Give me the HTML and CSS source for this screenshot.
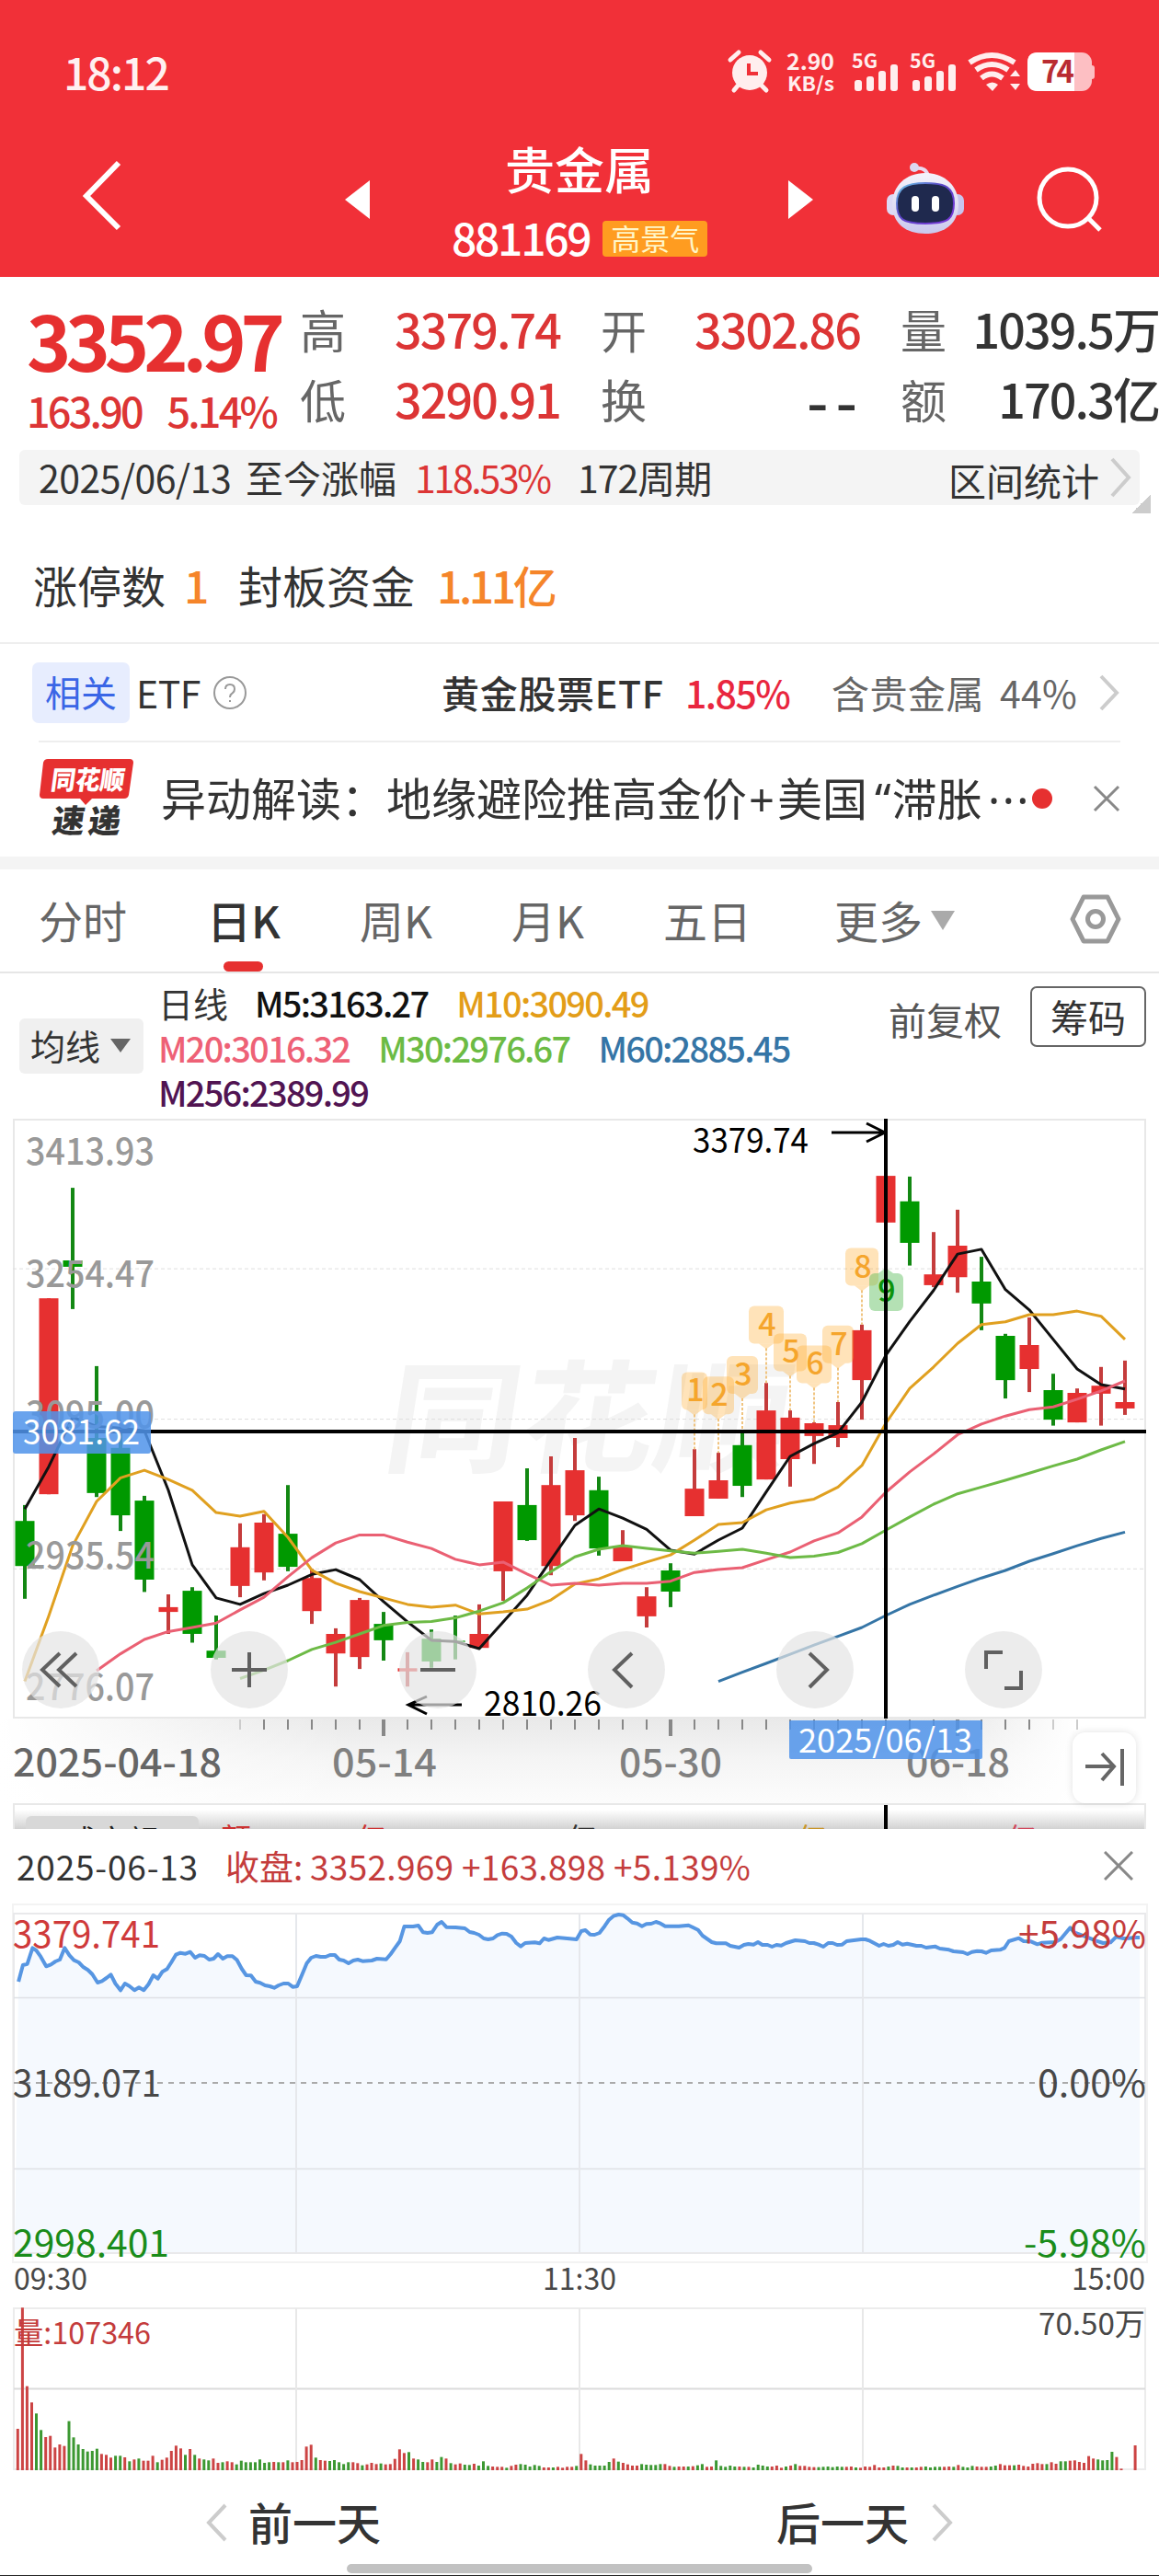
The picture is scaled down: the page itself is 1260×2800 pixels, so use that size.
FILE: index.html
```html
<!DOCTYPE html>
<html lang="zh-CN">
<head>
    <meta charset="UTF-8">
    <title>贵金属 881169</title>
    <link rel="stylesheet" href="styles.css">
</head>
<body>
    <header class="header">
        <div class="status-bar">
            <span class="clock">18:12</span>
            <svg class="status-icons" width="404" height="50" viewBox="0 0 404 50">
                <g fill="#ffeeee" stroke="none">
                    <circle cx="25" cy="26" r="19"/>
                    <path d="M4 12L13 4M46 12L37 4M13 39L8 45M37 39L43 45" stroke="#ffeeee" stroke-width="5" stroke-linecap="round"/>
                    <path d="M24 16v11h10" fill="none" stroke="#f13038" stroke-width="4"/>
                    <text x="65" y="23" font-size="24" font-weight="700" textLength="52" lengthAdjust="spacingAndGlyphs">2.90</text>
                    <text x="66" y="46" font-size="21" font-weight="700" textLength="51" lengthAdjust="spacingAndGlyphs">KB/s</text>
                    <g id="signal">
                        <text x="136" y="21" font-size="21" font-weight="700" textLength="28" lengthAdjust="spacingAndGlyphs">5G</text>
                        <rect x="139" y="34" width="8" height="12" rx="3"/>
                        <rect x="152" y="30" width="8" height="16" rx="3"/>
                        <rect x="165" y="24" width="8" height="22" rx="3"/>
                        <rect x="178" y="17" width="8" height="29" rx="3"/>
                    </g>
                    <use href="#signal" x="63"/>
                    <g fill="none" stroke="#ffeeee" stroke-width="6">
                        <path d="M264 15Q288 -1 313 15"/>
                        <path d="M271 23Q288 11 306 23"/>
                        <path d="M277 32Q288 23 300 32"/>
                    </g>
                    <path d="M282 39q7-5 13 0l-6 7z"/>
                    <path d="M308 31l6-7 5 7zM308 39l6 7 5-7z" transform="translate(0,-1)"/>
                    <rect x="392" y="18" width="8" height="15" rx="3" fill="#fdbfc3"/>
                    <rect x="327" y="4" width="70" height="42" rx="11" fill="#fdbfc3"/>
                    <path d="M338 4h40v42h-40q-11 0-11-11v-20q0-11 11-11z" fill="#fff"/>
                    <text x="342" y="37" font-size="33" font-weight="700" fill="#b92c31" textLength="36">74</text>
                </g>
            </svg>
        </div>
        <div class="nav-bar">
            <svg class="back" width="44" height="80" viewBox="0 0 44 80"><path d="M41 3L6 39L41 74" fill="none" stroke="#fff" stroke-width="6"/></svg>
            <svg class="prev" width="28" height="42" viewBox="0 0 28 42"><path d="M27 0V42L0 21z" fill="#fff"/></svg>
            <div class="title">
                <h1>贵金属</h1>
                <div class="code"><span class="code-num">881169</span><span class="tag">高景气</span></div>
            </div>
            <svg class="next" width="28" height="42" viewBox="0 0 28 42"><path d="M0 0V42L27 21z" fill="#fff"/></svg>
            <svg class="robot" width="88" height="80" viewBox="0 0 88 80">
                <defs>
                    <linearGradient id="head" x1="0" y1="0" x2="0" y2="1"><stop offset="0" stop-color="#f4f2fb"/><stop offset=".6" stop-color="#dedcf2"/><stop offset="1" stop-color="#c9c8ee"/></linearGradient>
                    <linearGradient id="rim" x1="0" y1="0" x2="1" y2="1"><stop offset="0" stop-color="#6fd3ea"/><stop offset=".4" stop-color="#5a48c8"/><stop offset="1" stop-color="#7a35d8"/></linearGradient>
                </defs>
                <path d="M31 8q14-2 15 10" fill="none" stroke="#ead9ee" stroke-width="4"/>
                <circle cx="31" cy="7" r="5" fill="#dcd6f0"/>
                <rect x="1" y="36" width="14" height="23" rx="7" fill="#dcd9f5"/>
                <rect x="71" y="36" width="14" height="23" rx="7" fill="#c8c5ee"/>
                <path d="M43 13C64 13 79 27 79 47C79 68 64 79 43 79C22 79 7 68 7 47C7 27 22 13 43 13z" fill="url(#head)"/>
                <path d="M43 24C65 24 74 29 74 46C74 63 68 68 43 68C18 68 12 63 12 46C12 29 22 24 43 24z" fill="#1f294e" stroke="url(#rim)" stroke-width="2"/>
                <rect x="28" y="38" width="8" height="17" rx="4" fill="#fff"/>
                <rect x="50" y="38" width="8" height="17" rx="4" fill="#fff"/>
            </svg>
            <svg class="search" width="74" height="74" viewBox="0 0 74 74"><g fill="none" stroke="#fff" stroke-width="5"><circle cx="35" cy="35" r="31"/><path d="M57 57L70 70"/></g></svg>
        </div>
    </header>

    <section class="quote">
        <div class="price-box">
            <div class="price">3352.97</div>
            <div class="change"><span>163.90</span><span>5.14%</span></div>
        </div>
        <div class="quote-grid">
            <span class="label">高</span><span class="val up">3379.74</span>
            <span class="label">开</span><span class="val up">3302.86</span>
            <span class="label">量</span><span class="val">1039.5万</span>
            <span class="label">低</span><span class="val up">3290.91</span>
            <span class="label">换</span><span class="val dashes">--</span>
            <span class="label">额</span><span class="val">170.3亿</span>
        </div>
    </section>

    <section class="period">
        <span class="period-date">2025/06/13</span>
        <span class="period-name">至今涨幅</span>
        <span class="period-pct up">118.53%</span>
        <span class="period-count">172周期</span>
        <span class="period-link">区间统计</span>
        <svg width="24" height="44" viewBox="0 0 24 44"><path d="M2 2L20 22L2 42" fill="none" stroke="#ccc" stroke-width="4"/></svg>
        <i class="corner"></i>
    </section>

    <section class="limit">
        <span>涨停数</span><b class="one">1</b><span class="seal">封板资金</span><b>1.11亿</b>
    </section>

    <section class="etf">
        <span class="etf-badge">相关</span>
        <span class="etf-word">ETF</span>
        <svg class="help" width="38" height="38" viewBox="0 0 38 38"><circle cx="19" cy="19" r="17" fill="none" stroke="#999" stroke-width="2"/><path d="M14 15q0-5 5-5t5 5q0 3-3 5q-2 1-2 4M19 27v2" fill="none" stroke="#999" stroke-width="2"/></svg>
        <span class="etf-name">黄金股票ETF</span>
        <span class="etf-pct">1.85%</span>
        <span class="etf-hold">含贵金属</span>
        <span class="etf-rate">44%</span>
        <svg class="etf-arrow" width="24" height="40" viewBox="0 0 24 40"><path d="M3 2L20 20L3 38" fill="none" stroke="#ccc" stroke-width="4"/></svg>
    </section>

    <section class="news">
        <svg class="news-logo" width="106" height="86" viewBox="0 0 106 86">
            <path d="M10 1H99q4 0 4 4L98 40q-1 4-5 4H58l-7 7l-6-7H5q-4 0-4-4L5 5q1-4 5-4z" fill="#e63030"/>
            <g transform="skewX(-8)" font-weight="900">
                <text x="17" y="34" font-size="28" fill="#fff" textLength="80" lengthAdjust="spacingAndGlyphs">同花顺</text>
                <text x="25" y="81" font-size="35" fill="#333" textLength="74">速递</text>
            </g>
        </svg>
        <span class="news-text">异动解读：地缘避险推高金价<em>+</em>美国<q>“</q>滞胀</span><span class="dots">···</span>
        <i class="red-dot"></i>
        <svg class="close" width="30" height="30" viewBox="0 0 30 30"><path d="M2 2L28 28M28 2L2 28" stroke="#888" stroke-width="3"/></svg>
    </section>

    <nav class="tabs">
        <span>分时</span>
        <span class="active">日K</span>
        <span>周K</span>
        <span>月K</span>
        <span>五日</span>
        <span>更多</span>
        <svg class="more" width="26" height="21" viewBox="0 0 26 21"><path d="M0 0H26L13 21z" fill="#aaa"/></svg>
        <svg class="gear" width="58" height="56" viewBox="0 0 58 56"><g fill="none" stroke="#999" stroke-width="5" stroke-linejoin="round"><path d="M16 4H42L54 28L42 52H16L4 28z"/><circle cx="29" cy="28" r="8.5"/></g></svg>
    </nav>

    <section class="ma">
        <div class="ma-btn">均线<svg width="22" height="15" viewBox="0 0 22 15"><path d="M0 0H22L11 15z" fill="#666"/></svg></div>
        <div class="ma-list">
            <div><span class="ma-name">日线</span><span class="m5">M5:3163.27</span><span class="m10">M10:3090.49</span></div>
            <div><span class="m20">M20:3016.32</span><span class="m30">M30:2976.67</span><span class="m60">M60:2885.45</span></div>
            <div><span class="m256">M256:2389.99</span></div>
        </div>
        <span class="adjust">前复权</span>
        <span class="chips">筹码</span>
    </section>

    <section class="kline">
        <svg id="kline" width="1260" height="652" viewBox="0 0 1260 652"></svg>
        <div class="tools">
            <i><svg width="84" height="84" viewBox="0 0 84 84"><path d="M41 24L22 42L41 60M59 24L40 42L59 60"/></svg></i>
            <i><svg width="84" height="84" viewBox="0 0 84 84"><path d="M23 42H61M42 23V61"/></svg></i>
            <i><svg width="84" height="84" viewBox="0 0 84 84"><path d="M23 42H61"/></svg></i>
            <i><svg width="84" height="84" viewBox="0 0 84 84"><path d="M48 24L29 42L48 61"/></svg></i>
            <i><svg width="84" height="84" viewBox="0 0 84 84"><path d="M36 24L55 42L36 61"/></svg></i>
            <i><svg width="84" height="84" viewBox="0 0 84 84"><path d="M23 41V23H41M61 43V62H43"/></svg></i>
        </div>
    </section>

    <section class="axis">
        <svg id="axis" width="1260" height="92" viewBox="0 0 1260 92"></svg>
        <div class="jump"><svg width="48" height="44" viewBox="0 0 48 44"><path d="M3 21H33M21 7L34 21L21 36M43 2V42" fill="none" stroke="#666" stroke-width="4"/></svg></div>
    </section>

    <section class="amount">
        <span class="amount-pill">成交额</span>
        <span class="a1">额</span><span class="a2">亿</span><span class="a3">亿</span><span class="a4">亿</span><span class="a5">亿</span>
    </section>

    <section class="sheet">
        <div class="sheet-head">
            <span class="sheet-date">2025-06-13</span>
            <span class="sheet-close">收盘:</span>
            <span class="sheet-val">3352.969 +163.898 +5.139%</span>
            <svg width="32" height="32" viewBox="0 0 32 32"><path d="M1 1L31 31M31 1L1 31" stroke="#888" stroke-width="3"/></svg>
        </div>
        <svg id="intraday" width="1260" height="392" viewBox="0 0 1260 392"></svg>
        <div class="times"><span>09:30</span><span>11:30</span><span>15:00</span></div>
        <svg id="volume" width="1260" height="178" viewBox="0 0 1260 178"></svg>
        <div class="days">
            <svg width="24" height="42" viewBox="0 0 24 42"><path d="M21 2L3 21L21 40" fill="none" stroke="#ccc" stroke-width="4"/></svg>
            <span class="day-prev">前一天</span>
            <span class="day-next">后一天</span>
            <svg width="24" height="42" viewBox="0 0 24 42"><path d="M3 2L21 21L3 40" fill="none" stroke="#ccc" stroke-width="4"/></svg>
        </div>
        <div class="home-bar"></div>
    </section>
    <script src="charts.js"></script>
</body>
</html>
```
FILE: styles.css
```css
* {
    box-sizing: border-box;
}
body {
    margin: 0;
    width: 1260px;
    height: 2800px;
    overflow: hidden;
    background: #fff;
    color: #333;
    font-family: "Noto Sans CJK SC", "Noto Sans", sans-serif;
    line-height: 1;
    border-bottom: 1px solid #222;
}
svg {
    display: block;
    flex: none;
}
span {
    white-space: nowrap;
}
i, em {
    font-style: normal;
}
.up {
    color: #dc3535;
}

/* header */
.header {
    height: 301px;
    background: #f13038;
    color: #fff;
}
.status-bar {
    height: 154px;
    padding: 53px 66px 0 69px;
    display: flex;
    justify-content: space-between;
}
.clock {
    font-size: 48px;
    font-weight: 500;
    line-height: 48px;
    letter-spacing: -2px;
    color: #fff0f0;
}
.nav-bar {
    display: flex;
    height: 147px;
}
.back {
    margin: 20px 0 0 88px;
}
.prev {
    margin: 42px 0 0 243px;
}
.title {
    width: 400px;
    margin: 0 27px;
    text-align: center;
}
.title h1 {
    margin: 0;
    font-size: 54px;
    font-weight: 500;
    line-height: 58px;
}
.code {
    display: flex;
    align-items: center;
    margin: 26px 0 0 61px;
    height: 43px;
}
.code-num {
    font-size: 48px;
    font-weight: 500;
    line-height: 38px;
    margin-top: -5px;
    letter-spacing: -2.3px;
}
.tag {
    margin-left: 14px;
    width: 114px;
    height: 39px;
    line-height: 36px;
    font-size: 32px;
    border-radius: 4px;
    background: #ff9c20;
    color: #fff6c8;
}
.next {
    margin: 42px 0 0;
}
.robot {
    margin: 21px 0 0 78px;
}
.search {
    margin: 26px 0 0 75px;
}

/* quote */
.quote {
    display: flex;
    height: 188px;
}
.price-box {
    width: 326px;
    padding: 28px 0 0 29px;
}
.price {
    height: 90px;
    line-height: 80px;
    font-size: 82px;
    font-weight: 700;
    letter-spacing: -6px;
    color: #e63030;
}
.change {
    display: flex;
    justify-content: space-between;
    width: 271px;
    margin-top: 4px;
    font-size: 45px;
    line-height: 45px;
    font-weight: 500;
    letter-spacing: -2.8px;
    color: #dc3535;
}
.quote-grid {
    display: grid;
    grid-template-columns: 77px 250px 76px 250px 76px 205px;
    grid-template-rows: 76px 76px;
    padding-top: 18px;
    align-items: center;
}
.label {
    font-size: 50px;
    color: #666;
}
.val {
    font-size: 52px;
    font-weight: 500;
    letter-spacing: -1.9px;
    text-align: right;
    padding-right: 44px;
}
.val:nth-child(6n) {
    padding-right: 0;
}
.val.dashes {
    font-size: 66px;
    letter-spacing: 8px;
    padding-right: 39px;
}

.period {
    position: relative;
    display: flex;
    align-items: center;
    height: 60px;
    margin: 0 21px;
    padding: 0 8px 0 21px;
    border-radius: 6px;
    background: #f4f4f4;
    font-size: 41px;
    line-height: 54px;
}
.period > span {
    margin-top: -3px;
}
.period-date {
    width: 225px;
    letter-spacing: -.5px;
}
.period-name {
    width: 184px;
}
.period-pct {
    width: 177px;
    letter-spacing: -2.3px;
}
.period-count {
    letter-spacing: -1px;
}
.period-link {
    margin-left: auto;
    margin-right: 12px;
    padding-top: 6px;
}
.corner {
    position: absolute;
    right: -12px;
    bottom: -9px;
    width: 21px;
    height: 21px;
    background: linear-gradient(135deg, transparent 50%, #ccc 50%);
}

.limit {
    height: 151px;
    padding: 57px 0 0 36px;
    display: flex;
    font-size: 48px;
    line-height: 58px;
    border-bottom: 2px solid #eee;
}
.limit b {
    color: #f5852a;
    font-weight: 500;
    margin-left: 24px;
    letter-spacing: -3.4px;
}
.limit .one {
    margin-left: 20px;
}
.seal {
    margin-left: 35px;
}

.etf {
    display: flex;
    align-items: center;
    height: 105px;
    margin: 0 42px 0 35px;
    font-size: 41px;
    line-height: 44px;
}
.etf span {
    padding-bottom: 2px;
}
.etf-badge {
    width: 106px;
    height: 66px;
    line-height: 62px;
    text-align: center;
    font-size: 39px;
    border-radius: 7px;
    background: #e7edfe;
    color: #3a66e6;
}
.etf-word {
    margin-left: 7px;
    width: 83px;
    letter-spacing: -.5px;
}
.etf-name {
    margin-left: 211px;
    width: 265px;
    font-weight: 500;
    letter-spacing: .7px;
}
.etf-pct {
    width: 159px;
    color: #e9263e;
    font-weight: 500;
    letter-spacing: -1.5px;
}
.etf-hold {
    width: 183px;
    letter-spacing: .5px;
    color: #666;
}
.etf-rate {
    color: #666;
    letter-spacing: .2px;
}
.etf-arrow {
    margin-left: auto;
}

.news {
    display: flex;
    align-items: center;
    height: 126px;
    margin: 0 42px;
    border-top: 2px solid #eee;
    font-size: 49px;
}
.news-logo {
    margin: -4px 27px 0 0;
}
.news-text {
    width: 899px;
    height: 50px;
    line-height: 43px;
}
.news-text em {
    font-family: "Noto Sans";
    margin: 0 3px 0 2px;
}
.news-text q {
    quotes: none;
    font-family: "Noto Sans";
    margin: 0 1px 0 8px;
}
.news-text q::before, .news-text q::after {
    content: none;
}
.dots {
    width: 50px;
    line-height: 50px;
    letter-spacing: 2.5px;
    font-family: "Noto Sans";
}
.red-dot {
    flex: none;
    width: 22px;
    height: 22px;
    margin: -3px 0 0 -2px;
    border-radius: 50%;
    background: #e63030;
}
.close {
    margin: -3px 0 0 auto;
}

/* tabs */
.tabs {
    display: flex;
    align-items: center;
    height: 127px;
    padding: 0 40px 0 42px;
    border-top: 14px solid #f4f4f4;
    border-bottom: 2px solid #e6e6e6;
    font-size: 48px;
    color: #666;
}
.tabs span {
    line-height: 109px;
    padding-bottom: 2px;
    margin-right: 86px;
}
.tabs .active {
    position: relative;
    color: #333;
    font-weight: 500;
    margin-left: 1px;
}
.tabs .active::after {
    content: "";
    position: absolute;
    left: 18px;
    bottom: 0;
    width: 43px;
    height: 11px;
    border-radius: 6px;
    background: #e63030;
}
.tabs span:nth-child(5) {
    margin-right: 90px;
}
.tabs span:nth-child(6) {
    margin-right: 9px;
}
.gear {
    margin: -3px 0 0 auto;
}

/* moving averages */
.ma {
    display: flex;
    height: 158px;
    padding-left: 21px;
}
.ma-btn {
    display: flex;
    align-items: center;
    justify-content: space-between;
    width: 135px;
    height: 60px;
    margin-top: 49px;
    padding: 0 14px 2px 12px;
    border-radius: 6px;
    background: #f0f0f0;
    font-size: 38px;
}
.ma-list {
    width: 810px;
    padding: 8px 0 0 16px;
    font-size: 38px;
    font-weight: 500;
}
.ma-list div {
    display: flex;
    gap: 31px;
    height: 48.5px;
    line-height: 48px;
}
.ma-list span {
    letter-spacing: -1.75px;
}
.ma-list .ma-name {
    font-weight: 400;
    letter-spacing: 0;
    margin-right: -2px;
}
.m5 { color: #111; }
.m10 { color: #e39d18; }
.m20 { color: #ee6176; }
.m30 { color: #6cbb44; }
.m60 { color: #3575a6; }
.m256 { color: #511452; }
.adjust {
    width: 154px;
    padding-top: 29px;
    font-size: 41px;
    color: #555;
}
.chips {
    width: 126px;
    height: 66px;
    margin-top: 14px;
    line-height: 60px;
    text-align: center;
    font-size: 41px;
    border: 2px solid #666;
    border-radius: 7px;
}

.kline {
    position: relative;
    height: 652px;
}
.tools {
    position: absolute;
    left: 24px;
    top: 557px;
    display: flex;
    gap: 121px;
}
.tools i {
    width: 84px;
    height: 84px;
    border-radius: 50%;
    background: rgba(228, 228, 228, .7);
}
.tools path {
    fill: none;
    stroke: #606060;
    stroke-width: 4;
}

.axis {
    position: relative;
    height: 92px;
}
.jump {
    position: absolute;
    left: 1166px;
    top: 15px;
    width: 69px;
    height: 77px;
    padding: 16px 0 0 11px;
    border-radius: 14px;
    background: #fff;
    box-shadow: 0 0 8px rgba(0, 0, 0, .12);
}
.amount {
    display: flex;
    height: 28px;
    margin: 0 14px;
    padding-top: 14px;
    overflow: hidden;
    border: 2px solid #e8e8e8;
    border-bottom: none;
    background: linear-gradient(90deg, transparent 945px, #000 945px, #000 949px, transparent 949px),
        linear-gradient(#fff 20%, #d2d2d2);
    font-size: 33px;
    line-height: 50px;
}
.amount span {
    flex: none;
    width: 206px;
    margin-top: -4px;
}
.amount .amount-pill {
    width: 188px;
    height: 50px;
    margin: -2px 24px 0 12px;
    border-radius: 6px;
    background: #d8d8d8;
    text-align: center;
    color: #222;
}
.amount .a1 { width: 147px; color: #c33; }
.a2 { color: #c33; }
.amount .a2 { width: 229px; }
.amount .a3 { width: 250px; }
.a4 { color: #c8962b; }
.amount .a4 { width: 228px; }
.a5 { color: #d04a5e; }

/* day sheet */
.sheet {
    height: 812px;
    background: #fff;
}
.sheet-head {
    display: flex;
    align-items: center;
    height: 80px;
    padding: 0 28px 0 18px;
    font-size: 37px;
    color: #c43c3c;
}
.sheet-date {
    width: 227px;
    color: #333;
    letter-spacing: .8px;
}
.sheet-close {
    width: 92px;
}
.sheet-val {
    letter-spacing: .3px;
}
.sheet-head svg {
    margin-left: auto;
}
.times {
    display: flex;
    justify-content: space-between;
    height: 47px;
    padding: 0 15px;
    font-size: 32px;
    line-height: 30px;
    color: #484848;
}
.days {
    display: flex;
    align-items: center;
    height: 116px;
    padding: 0 224px;
    font-size: 48px;
    font-weight: 500;
}
.days span {
    line-height: 106px;
    padding-bottom: 6px;
}
.days svg {
    margin-top: -2px;
}
.day-prev {
    margin-left: 22px;
}
.day-next {
    margin-left: auto;
    margin-right: 24px;
}
.home-bar {
    width: 506px;
    height: 10px;
    margin: -14px auto 0;
    position: relative;
    border-radius: 5px;
    background: #c2c2c2;
}
```
FILE: charts.js
```js
const RED = '#e63030';
const GREEN = '#009900';

function line(x1, y1, x2, y2, stroke, width, extra = '') {
    return `<line x1="${x1}" y1="${y1}" x2="${x2}" y2="${y2}" stroke="${stroke}" stroke-width="${width}" ${extra}/>`;
}
function rect(x, y, w, h, fill, extra = '') {
    return `<rect x="${x}" y="${y}" width="${w}" height="${h}" fill="${fill}" ${extra}/>`;
}
function text(x, y, size, fill, len, str, extra = '') {
    return `<text x="${x}" y="${y}" font-size="${size}" fill="${fill}" textLength="${len}" lengthAdjust="spacingAndGlyphs" ${extra}>${str}</text>`;
}

// ---- daily candles: [up?, high, body top, body bottom, low] ----
const candles = [
    [0,1005,1045,1158,1240],[1,487,487,978,978],[0,210,392,408,514],[0,657,837,975,985],[0,822,862,1031,1070],
    [0,982,994,1192,1223],[1,1229,1261,1273,1328],[0,1211,1220,1328,1350],[0,1282,1370,1388,1392],[1,1051,1111,1208,1236],
    [1,1028,1049,1174,1194],[0,955,1077,1160,1171],[1,1165,1188,1271,1303],[1,1314,1328,1377,1460],[1,1238,1243,1386,1416],
    [0,1273,1303,1344,1395],[1,1374,1414,1422,1460],[0,1317,1340,1397,1413],[0,1282,1345,1349,1392],[1,1254,1328,1363,1363],
    [1,996,996,1171,1245],[0,913,1005,1093,1095],[1,883,955,1158,1181],[1,837,918,1031,1045],[0,934,968,1114,1132],
    [1,1068,1107,1146,1146],[1,1211,1234,1284,1312],[0,1151,1169,1222,1261],[1,865,964,1033,1033],[1,874,943,989,989],
    [0,825,855,957,985],[1,699,768,941,941],[1,768,786,890,959],[1,798,800,832,902],[1,747,805,837,860],
    [1,553,567,692,791],[1,120,180,297,325],[0,182,244,348,405],[1,321,427,454,459],[1,265,355,434,473],
    [0,383,445,500,567],[0,576,581,692,738],[1,535,604,664,722],[0,676,717,791,806],[1,713,724,798,798],
    [1,659,706,726,806],[1,643,747,763,779]
];
// [color, first candle, values]
const averages = [
    ['#111', 0, [1015,909,785,808,812,819,968,1155,1238,1254,1227,1206,1179,1167,1192,1247,1298,1344,1347,1365,1298,1231,1143,1056,1015,1038,1066,1118,1128,1093,1063,972,883,851,824,747,630,545,467,376,364,465,516,590,664,703,714]],
    ['#e0a020', 0, [1447,1283,1107,996,937,918,941,968,1024,1033,1021,1086,1168,1201,1222,1238,1254,1261,1256,1278,1273,1266,1243,1203,1190,1167,1148,1130,1093,1054,1049,1017,1000,990,960,906,800,713,659,600,553,546,528,528,519,532,590]],
    ['#ea6073', 3, [1420,1378,1342,1322,1312,1301,1268,1236,1185,1137,1100,1080,1080,1098,1114,1141,1155,1148,1178,1206,1201,1206,1201,1201,1196,1174,1167,1162,1142,1123,1095,1075,1035,973,922,877,829,802,782,766,759,740,719,694]],
    ['#6dba46', 9, [1440,1419,1395,1367,1349,1328,1307,1299,1297,1288,1271,1250,1213,1172,1135,1116,1107,1114,1120,1126,1121,1116,1126,1137,1133,1124,1102,1068,1035,1003,977,960,943,925,907,890,867,846]],
    ['#3575a6', 29, [1447,1424,1402,1379,1356,1334,1312,1282,1254,1231,1209,1188,1169,1146,1127,1107,1089,1073]]
];
// nine-count markers: [candle, label top, number, width]
const marks = [[28,672,1,28],[29,683,2,34],[30,632,3,34],[31,506,4,38],[32,575,5,36],[33,605,6,38],[34,555,7,34],[35,361,8,36]];

const X = i => 27 + 26 * i;
const Y = v => +(v * 0.4337 - 16).toFixed(1);

let k = text(0, 0, 132, '#f4f4f4', 440, '同花顺', 'font-weight="700" transform="translate(413,374) skewX(-9)"');
k += `<rect x="15" y="1" width="1230" height="650" fill="none" stroke="#e8e8e8" stroke-width="2"/>`;
[413, 790, 1165].forEach(v => { k += line(14, Y(v), 1243, Y(v), '#dedede', 1, 'stroke-dasharray="4 3"'); });

candles.forEach(([up, high, top, bottom, low], i) => {
    k += line(X(i), Y(high), X(i), Y(low), up ? '#c53c3c' : '#138813', 4);
    k += rect(X(i) - 10.5, Y(top), 21, (bottom - top) * 0.4337, up ? RED : GREEN);
});
averages.forEach(([color, from, list]) => {
    const pts = list.map((v, n) => X(from + n) + ',' + Y(v)).join(' ');
    k += `<polyline points="${pts}" fill="none" stroke="${color}" stroke-width="3" stroke-linejoin="round"/>`;
});
marks.forEach(([i, top, num, w]) => {
    const y = Y(top);
    k += line(X(i), y + 46, X(i), Y(candles[i][1]), '#f0c480', 2, 'stroke-dasharray="3 2"');
    k += rect(X(i) - w / 2, y, w, 41, '#ffa726', 'rx="6" opacity=".32"');
    k += `<path d="M${X(i) - 8} ${y + 41}h16l-8 6z" fill="#ffa726" opacity=".32"/>`;
    k += `<text x="${X(i) + 1}" y="${y + 32}" font-size="34" font-weight="500" fill="#f5a52c" text-anchor="middle">${num}</text>`;
});
// price scale
[['3413.93', 48], ['3254.47', 181], ['3095.00', 334], ['2935.54', 487], ['2776.07', 630]].forEach(([s, y]) => {
    k += text(28, y + 2, 40, '#999', 140, s, 'font-weight="500"');
});
k += rect(945, 168, 37, 41, '#4db84d', 'rx="6" opacity=".42"') + '<path d="M955 168h16l-8-6z" fill="#4db84d" opacity=".42"/>';
k += '<text x="964" y="199" font-size="34" font-weight="500" fill="#0b930b" text-anchor="middle">9</text>';
// crosshair
k += line(14, 340, 1246, 340, '#000', 4) + line(963, 0, 963, 652, '#000', 4);
k += rect(14, 318, 150, 46, '#5094ea', 'rx="3" opacity=".86"') + text(25, 354, 37, '#fff', 127, '3081.62');
k += text(753, 37, 37, '#000', 126, '3379.74') + '<path d="M904 15H962M942 5L962 15L942 25" fill="none" stroke="#000" stroke-width="3"/>';
k += text(526, 649, 37, '#000', 128, '2810.26') + '<path d="M502 637H444M464 628L444 637L464 647" fill="none" stroke="#000" stroke-width="3"/>';
document.getElementById('kline').innerHTML = k;

// ---- time axis ----
let a = `<defs>
    <linearGradient id="fall" x1="0" y1="0" x2="0" y2="1"><stop offset="0" stop-color="#e9e9e9"/><stop offset=".5" stop-color="#f5f5f5"/><stop offset="1" stop-color="#fcfcfc"/></linearGradient>
    <linearGradient id="side"><stop offset="0" stop-color="#fff"/><stop offset=".3" stop-color="#fff" stop-opacity="0"/><stop offset=".82" stop-color="#fff" stop-opacity="0"/><stop offset=".93" stop-color="#fff"/></linearGradient>
    </defs>` + rect(0, 0, 1260, 92, 'url(#fall)') + rect(0, 0, 1260, 92, 'url(#side)');
for (let i = 9; i < 45; i++) {
    const major = i % 12 === 3;
    a += line(X(i), 1, X(i), major ? 19 : 12, i === 9 || i > 42 ? '#ccc' : '#888', major ? 4 : 2);
}
a += text(14, 63, 41, '#666', 227, '2025-04-18', 'font-weight="500"');
a += text(361, 63, 41, '#808080', 114, '05-14', 'font-weight="500"');
a += text(673, 63, 41, '#808080', 112, '05-30', 'font-weight="500"');
a += text(985, 63, 41, '#808080', 113, '06-18', 'font-weight="500"');
a += rect(858, 2, 210, 42, '#5094ea', 'rx="2" opacity=".86"') + text(868, 37, 36, '#fff', 189, '2025/06/13');
document.getElementById('axis').innerHTML = a;

// ---- intraday ----
const prices = [50,312,62,258,74,254,88,202,98,210,110,230,125,262,138,256,150,246,162,240,175,202,188,226,200,242,213,249,226,265,238,274,250,288,264,315,276,310,288,300,300,289,312,318,326,340,338,318,350,326,364,340,376,331,389,340,402,320,415,291,427,302,439,280,452,271,464,248,476,224,488,218,502,221,515,215,528,234,540,226,553,228,566,240,578,237,590,222,603,237,615,229,629,229,641,241,654,270,666,291,679,292,692,312,704,316,717,324,730,327,742,332,754,324,767,318,780,318,792,329,804,327,817,290,830,252,842,234,855,228,868,231,881,231,893,225,906,225,918,240,930,243,943,252,956,243,968,240,981,245,1006,243,1020,237,1045,239,1057,222,1070,200,1082,180,1094,132,1118,132,1132,129,1145,151,1157,153,1169,151,1183,126,1195,117,1208,134,1233,135,1258,138,1271,150,1283,153,1296,159,1309,171,1321,174,1334,171,1346,160,1359,155,1371,156,1384,165,1397,186,1409,197,1421,186,1447,184,1460,187,1472,171,1484,176,1508,168,1535,171,1560,174,1573,147,1584,144,1597,158,1609,159,1622,153,1636,131,1648,110,1660,98,1674,93,1686,95,1698,106,1711,119,1724,122,1737,131,1749,124,1762,123,1775,117,1787,122,1800,131,1837,131,1863,128,1875,135,1889,143,1901,162,1926,183,1938,187,1964,187,1976,195,2000,201,2013,192,2025,189,2039,191,2051,183,2063,192,2077,192,2089,198,2101,192,2114,194,2127,186,2152,177,2178,180,2190,186,2202,186,2215,191,2228,198,2241,186,2253,186,2265,192,2279,191,2291,180,2330,174,2342,174,2354,179,2366,187,2379,195,2391,189,2404,195,2417,192,2429,183,2442,191,2455,188,2480,195,2493,195,2506,201,2530,197,2543,204,2568,208,2580,213,2606,216,2618,222,2630,215,2644,212,2656,213,2668,218,2682,210,2706,208,2718,202,2730,180,2757,170,2770,180,2790,181,2807,190,2820,185,2855,183,2870,173,2896,136,2908,152,2940,166,2965,178,2985,186,3005,184,3020,166,3040,171,3055,170,3070,168,3084,168];
const pts = [];
for (let n = 0; n < prices.length; n += 2) {
    pts.push((prices[n] / 2.489).toFixed(1) + ',' + (prices[n + 1] / 3 - 18).toFixed(1));
}
let d = `<polygon points="16,380 ${pts.join(' ')} 1239,40 1239,380" fill="#f5f9fe"/>`;
d += '<rect x="14" y="2" width="1233" height="389" fill="none" stroke="#f3f3f3" stroke-width="2"/>';
d += '<rect x="15" y="12" width="1230" height="369" fill="none" stroke="#e9e9eb" stroke-width="2"/>';
d += line(15, 103.5, 1245, 103.5, '#dfe1e5', 1.5) + line(15, 289.5, 1245, 289.5, '#dfe1e5', 1.5);
[322, 630, 938].forEach(x => { d += line(x, 12, x, 381, '#e6e8ec', 2); });
d += line(15, 196, 1245, 196, '#aaa', 2, 'stroke-dasharray="6 6"');
d += `<polyline points="${pts.join(' ')}" fill="none" stroke="#5796e2" stroke-width="4" stroke-linejoin="round"/>`;
d += text(14, 49, 40, '#cf3a3a', 160, '3379.741') + text(14, 211, 40, '#484848', 161, '3189.071') + text(14, 385, 40, '#1a8c1a', 170, '2998.401');
d += text(1107, 49, 40, '#c43c3c', 139, '+5.98%') + text(1128, 211, 40, '#484848', 118, '0.00%') + text(1113, 385, 40, '#1a8c1a', 133, '-5.98%');
document.getElementById('intraday').innerHTML = d;

// ---- volume: height and colour per minute ----
const heights = [135,530,274,221,185,131,108,112,74,84,79,160,107,84,69,61,63,70,53,50,41,47,47,42,29,35,38,31,31,47,26,34,41,63,80,71,50,69,50,38,35,32,38,24,26,29,26,19,31,26,26,26,35,24,26,27,26,26,32,26,27,33,77,83,41,33,31,30,33,26,20,26,26,23,16,19,24,20,22,19,20,37,68,56,59,38,35,27,26,35,27,43,38,23,19,22,18,17,21,15,29,14,12,11,11,8,14,18,20,18,12,17,14,9,9,9,11,8,11,11,14,53,32,19,15,15,15,27,38,28,24,19,15,15,20,18,17,17,20,20,14,11,12,12,12,13,16,20,11,12,32,14,11,15,12,12,11,11,9,18,15,12,12,15,8,12,15,20,14,14,11,10,10,11,12,10,12,11,11,12,9,8,12,11,17,9,9,12,15,14,9,9,9,9,11,12,9,11,11,11,12,11,17,11,9,14,12,11,11,12,15,20,16,16,16,18,14,12,21,23,20,20,26,21,29,29,31,32,27,24,46,38,35,32,33,60,43,5];
const colors = 'rrrrggrrrrrggggggg' + 'rrrggrgrgrrrgrrrrrgrgrggrrgrrggggggggrgrgrrrrrgrrgggggrrgrrrgrrrrrgrggrrggrgrrggrgggrrrgrrgggggrrgrrrrgrrgggggrgrrrrgggggrrgrrgrggrrgggggrgrggggrrrgrgrrrrggggggrrgrrrrrrgrggrgrrggggrrgrgggrrrggrrrgrrrrrrgrrggrrrrrrggggrrrgrrr';
let v = '<rect x="15" y="2" width="1230" height="175" fill="none" stroke="#ececec" stroke-width="2"/>';
v += line(15, 89.5, 1245, 89.5, '#dcdcdc', 2);
[322, 630, 938].forEach(x => { v += line(x, 2, x, 177, '#e8e8e8', 2); });
heights.forEach((h, i) => {
    const green = colors[i] === 'g';
    v += rect((17.8 + i * 5.062).toFixed(1), 178 - h / 3, 3, h / 3, green ? '#3c9832' : '#cc4444');
});
// closing auction
v += rect(1232.6, 151, 3, 27, '#cc4444');
v += text(15, 41, 33, '#c43c3c', 149, '量:107346') + text(1129, 31, 33, '#484848', 116, '70.50万');
document.getElementById('volume').innerHTML = v;
```
